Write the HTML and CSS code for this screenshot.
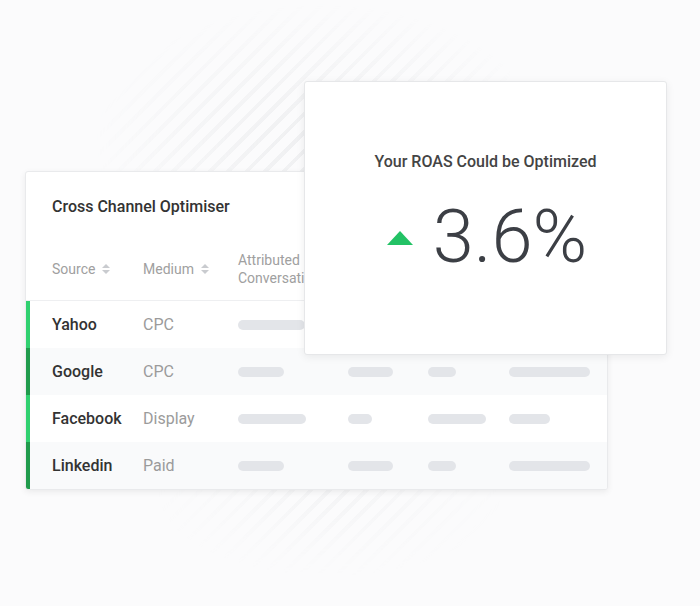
FILE: index.html
```html
<!DOCTYPE html>
<html lang="en">
<head>
  <meta charset="UTF-8" />
  <meta name="viewport" content="width=device-width, initial-scale=1.0" />
  <title>Cross Channel Optimiser</title>
  <link rel="stylesheet" href="styles.css">
</head>
<body>
  <div class="stage">
    <!-- faint diagonal texture behind the cards -->
    <div class="texture texture-top"></div>
    <div class="texture texture-bottom"></div>

    <div class="table-card">
      <h3 class="card-title">Cross Channel Optimiser</h3>

      <div class="row head">
        <div class="cell">Source <span class="sort"></span></div>
        <div class="cell">Medium <span class="sort"></span></div>
        <div class="cell two-line">Attributed<br>Conversati</div>
        <div class="cell"></div>
        <div class="cell"></div>
        <div class="cell"></div>
      </div>

      <div class="row light">
        <div class="cell name">Yahoo</div>
        <div class="cell medium">CPC</div>
        <div class="cell"><span class="bar" style="width:67px"></span></div>
        <div class="cell"><span class="bar" style="width:45px"></span></div>
        <div class="cell"><span class="bar" style="width:28px"></span></div>
        <div class="cell"><span class="bar" style="width:81px"></span></div>
      </div>
      <div class="row dark shade">
        <div class="cell name">Google</div>
        <div class="cell medium">CPC</div>
        <div class="cell"><span class="bar" style="width:46px"></span></div>
        <div class="cell"><span class="bar" style="width:45px"></span></div>
        <div class="cell"><span class="bar" style="width:28px"></span></div>
        <div class="cell"><span class="bar" style="width:81px"></span></div>
      </div>
      <div class="row light">
        <div class="cell name">Facebook</div>
        <div class="cell medium">Display</div>
        <div class="cell"><span class="bar" style="width:68px"></span></div>
        <div class="cell"><span class="bar" style="width:24px"></span></div>
        <div class="cell"><span class="bar" style="width:58px"></span></div>
        <div class="cell"><span class="bar" style="width:41px"></span></div>
      </div>
      <div class="row dark shade">
        <div class="cell name">Linkedin</div>
        <div class="cell medium">Paid</div>
        <div class="cell"><span class="bar" style="width:46px"></span></div>
        <div class="cell"><span class="bar" style="width:45px"></span></div>
        <div class="cell"><span class="bar" style="width:28px"></span></div>
        <div class="cell"><span class="bar" style="width:81px"></span></div>
      </div>
    </div>

    <div class="roas-card">
      <div class="roas-title">Your ROAS Could be Optimized</div>
      <div class="roas-value">
        <svg class="arrow" width="26" height="14" viewBox="0 0 26 14">
          <path d="M13 0 L26 14 L0 14 Z" fill="#23c265"/>
        </svg>
        <span>3.6%</span>
      </div>
    </div>
  </div>
</body>
</html>
```

FILE: styles.css
```css
* { box-sizing: border-box; }
body {
  margin: 0;
  font-family: Roboto, "Liberation Sans", sans-serif;
  background-color: #fbfbfc;
}
.stage {
  position: relative;
  width: 700px;
  height: 606px;
  padding: 171px 0 0 25px;
  overflow: hidden;
}
.texture {
  position: absolute;
  background: repeating-linear-gradient(135deg, transparent 0 9px, #e9eaec 9px 13px);
  opacity: 0.7;
}
.texture-top {
  left: 90px;
  top: 0;
  width: 420px;
  height: 220px;
  -webkit-mask-image: radial-gradient(ellipse at 55% 65%, #000 0%, rgba(0,0,0,0.45) 40%, transparent 70%);
}
.texture-bottom {
  left: 150px;
  top: 470px;
  width: 360px;
  height: 110px;
  -webkit-mask-image: radial-gradient(ellipse at 50% 20%, #000 0%, rgba(0,0,0,0.3) 40%, transparent 70%);
  opacity: 0.4;
}

/* table card */
.table-card {
  position: relative;
  width: 583px;
  background: #fff;
  border: 1px solid #e9eaec;
  border-radius: 3px;
  box-shadow: 0 2px 6px rgba(0, 0, 0, 0.07);
  overflow: hidden;
}
.card-title {
  margin: 0;
  padding: 25px 0 0 26px;
  font-size: 16px;
  line-height: 20px;
  font-weight: 500;
  color: #333;
}
.row {
  display: grid;
  grid-template-columns: 91px 95px 110px 80px 81px 1fr;
  align-items: center;
  height: 47px;
  padding-left: 22px;
  border-left: 4px solid transparent;
}
.row.head {
  height: 63px;
  margin-top: 21px;
  padding-left: 26px;
  border-left: none;
  border-bottom: 1px solid #eeeff1;
  font-size: 14px;
  color: #a0a0a0;
}
.row.light { border-left-color: #2fd06f; }
.row.dark { border-left-color: #1f9a4b; }
.row.shade { background: #f9fafb; }
.cell { white-space: nowrap; display: flex; align-items: center; }
.two-line { line-height: 18px; }
.sort {
  display: inline-block;
  position: relative;
  width: 8px;
  height: 10px;
  margin-left: 7px;
}
.sort::before, .sort::after {
  content: "";
  position: absolute;
  left: 0;
  border-left: 4px solid transparent;
  border-right: 4px solid transparent;
}
.sort::before { top: 0; border-bottom: 4px solid #c9cbcf; }
.sort::after { bottom: 0; border-top: 4px solid #c9cbcf; }
.name {
  font-size: 16px;
  font-weight: 500;
  color: #333;
}
.medium {
  font-size: 16px;
  color: #9b9b9b;
}
.bar {
  display: block;
  height: 10px;
  border-radius: 5px;
  background: #e3e5e9;
}

/* ROAS overlay card */
.roas-card {
  position: absolute;
  left: 304px;
  top: 81px;
  width: 363px;
  height: 274px;
  background: #fff;
  border: 1px solid #e6e7e9;
  border-radius: 3px;
  box-shadow: 0 2px 8px rgba(0, 0, 0, 0.07);
  display: flex;
  flex-direction: column;
  align-items: center;
  padding-top: 70px;
}
.roas-title {
  font-size: 16px;
  line-height: 20px;
  font-weight: 500;
  color: #444;
}
.roas-value {
  display: flex;
  align-items: center;
  margin-top: 25px;
  margin-left: 3px;
  gap: 20px;
}
.roas-value span {
  font-size: 74px;
  line-height: 80px;
  font-weight: 300;
  color: #3c3f45;
}
.arrow { margin-top: 2px; }
```
